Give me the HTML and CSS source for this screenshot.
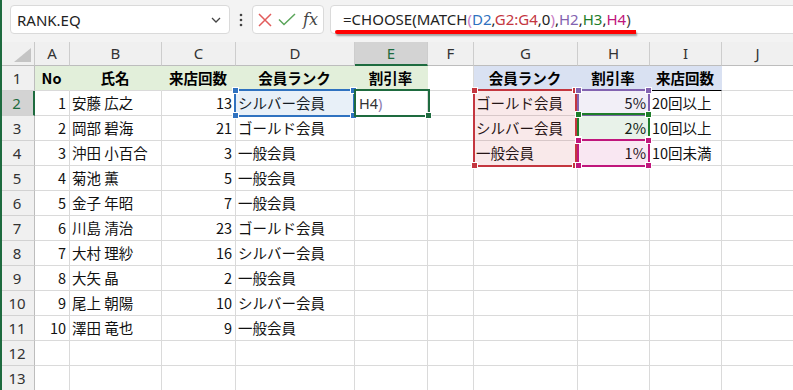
FILE: index.html
```html
<!DOCTYPE html>
<html lang="ja">
<head>
<meta charset="utf-8">
<title>RANK.EQ</title>
<link rel="stylesheet" href="styles.css">
</head>
<body>
<div class="app">
  <div class="edge"></div>
  <div class="toolbar">
    <div class="namebox">
      <span class="nb-text">RANK.EQ</span>
      <svg class="chev" width="10" height="6" viewBox="0 0 10 6"><polyline points="1,1 5,5 9,1" fill="none" stroke="#444" stroke-width="1.3"/></svg>
    </div>
    <div class="dots">
      <svg width="4" height="14" viewBox="0 0 4 14"><circle cx="2" cy="2" r="1.3" fill="#444"/><circle cx="2" cy="7" r="1.3" fill="#444"/><circle cx="2" cy="12" r="1.3" fill="#444"/></svg>
    </div>
    <div class="fxbox">
      <svg width="14" height="14" viewBox="0 0 14 14"><path d="M1 1 L13 13 M13 1 L1 13" stroke="#e25c5c" stroke-width="1.5" fill="none"/></svg>
      <svg width="18" height="13" viewBox="0 0 18 13"><polyline points="1,6.5 6,11.5 17,1" fill="none" stroke="#5aa55a" stroke-width="1.5"/></svg>
      <span class="fx">fx</span>
    </div>
    <div class="formula"><span class="k">=CHOOSE(MATCH</span><span class="pp">(</span><span class="c-d2">D2</span><span class="k">,</span><span class="c-g">G2:G4</span><span class="k">,0</span><span class="pp">)</span><span class="k">,</span><span class="c-h2">H2</span><span class="k">,</span><span class="c-h3">H3</span><span class="k">,</span><span class="c-h4">H4</span><span class="k2">)</span></div>
    <div class="underline"></div>
  </div>

  <div class="sheet">
    <div class="row colhead">
      <div class="corner"><svg width="17" height="14" viewBox="0 0 17 14"><polygon points="17,0 17,14 0,14" fill="#c4c4c4"/></svg></div>
      <div class="ch">A</div><div class="ch">B</div><div class="ch">C</div><div class="ch">D</div><div class="ch sel">E</div><div class="ch">F</div><div class="ch">G</div><div class="ch">H</div><div class="ch">I</div><div class="ch">J</div>
    </div>

    <div class="row">
      <div class="rh">1</div>
      <div class="c hg">No</div><div class="c hg">氏名</div><div class="c hg">来店回数</div><div class="c hg">会員ランク</div><div class="c hg">割引率</div>
      <div class="c"></div>
      <div class="c hb">会員ランク</div><div class="c hb">割引率</div><div class="c hb bb">来店回数</div>
      <div class="c"></div>
    </div>

    <div class="row">
      <div class="rh sel">2</div>
      <div class="c r">1</div><div class="c">安藤 広之</div><div class="c r">13</div><div class="c">シルバー会員</div><div class="c edit"><span class="et">H4</span><span class="ep">)</span></div>
      <div class="c"></div>
      <div class="c">ゴールド会員</div><div class="c r">5%</div><div class="c">20回以上</div>
      <div class="c"></div>
    </div>

    <div class="row">
      <div class="rh">3</div>
      <div class="c r">2</div><div class="c">岡部 碧海</div><div class="c r">21</div><div class="c">ゴールド会員</div><div class="c"></div>
      <div class="c"></div>
      <div class="c">シルバー会員</div><div class="c r">2%</div><div class="c">10回以上</div>
      <div class="c"></div>
    </div>

    <div class="row">
      <div class="rh">4</div>
      <div class="c r">3</div><div class="c">沖田 小百合</div><div class="c r">3</div><div class="c">一般会員</div><div class="c"></div>
      <div class="c"></div>
      <div class="c">一般会員</div><div class="c r">1%</div><div class="c">10回未満</div>
      <div class="c"></div>
    </div>

    <div class="row">
      <div class="rh">5</div>
      <div class="c r">4</div><div class="c">菊池 薫</div><div class="c r">5</div><div class="c">一般会員</div><div class="c"></div>
      <div class="c"></div><div class="c"></div><div class="c"></div><div class="c"></div><div class="c"></div>
    </div>

    <div class="row">
      <div class="rh">6</div>
      <div class="c r">5</div><div class="c">金子 年昭</div><div class="c r">7</div><div class="c">一般会員</div><div class="c"></div>
      <div class="c"></div><div class="c"></div><div class="c"></div><div class="c"></div><div class="c"></div>
    </div>

    <div class="row">
      <div class="rh">7</div>
      <div class="c r">6</div><div class="c">川島 清治</div><div class="c r">23</div><div class="c">ゴールド会員</div><div class="c"></div>
      <div class="c"></div><div class="c"></div><div class="c"></div><div class="c"></div><div class="c"></div>
    </div>

    <div class="row">
      <div class="rh">8</div>
      <div class="c r">7</div><div class="c">大村 理紗</div><div class="c r">16</div><div class="c">シルバー会員</div><div class="c"></div>
      <div class="c"></div><div class="c"></div><div class="c"></div><div class="c"></div><div class="c"></div>
    </div>

    <div class="row">
      <div class="rh">9</div>
      <div class="c r">8</div><div class="c">大矢 晶</div><div class="c r">2</div><div class="c">一般会員</div><div class="c"></div>
      <div class="c"></div><div class="c"></div><div class="c"></div><div class="c"></div><div class="c"></div>
    </div>

    <div class="row">
      <div class="rh">10</div>
      <div class="c r">9</div><div class="c">尾上 朝陽</div><div class="c r">10</div><div class="c">シルバー会員</div><div class="c"></div>
      <div class="c"></div><div class="c"></div><div class="c"></div><div class="c"></div><div class="c"></div>
    </div>

    <div class="row">
      <div class="rh">11</div>
      <div class="c r">10</div><div class="c">澤田 竜也</div><div class="c r">9</div><div class="c">一般会員</div><div class="c"></div>
      <div class="c"></div><div class="c"></div><div class="c"></div><div class="c"></div><div class="c"></div>
    </div>

    <div class="row">
      <div class="rh">12</div>
      <div class="c"></div><div class="c"></div><div class="c"></div><div class="c"></div><div class="c"></div>
      <div class="c"></div><div class="c"></div><div class="c"></div><div class="c"></div><div class="c"></div>
    </div>

    <div class="row">
      <div class="rh">13</div>
      <div class="c"></div><div class="c"></div><div class="c"></div><div class="c"></div><div class="c"></div>
      <div class="c"></div><div class="c"></div><div class="c"></div><div class="c"></div><div class="c"></div>
    </div>

    <!-- range highlights (overlays) -->
    <div class="rng rng-d2"><i class="hd tl"></i><i class="hd tr"></i><i class="hd bl"></i><i class="hd br"></i></div>
    <div class="rng rng-g"><i class="hd tl"></i><i class="hd tr"></i><i class="hd bl"></i><i class="hd br"></i></div>
    <div class="rng rng-h2"><i class="hd tl"></i><i class="hd tr"></i><i class="hd bl"></i><i class="hd br"></i></div>
    <div class="rng rng-h3"><i class="hd tl"></i><i class="hd tr"></i><i class="hd bl"></i><i class="hd br"></i></div>
    <div class="rng rng-h4"><i class="hd tl"></i><i class="hd tr"></i><i class="hd bl"></i><i class="hd br"></i></div>
    <div class="active"><i class="hd br"></i></div>
  </div>
</div>
</body>
</html>
```

FILE: styles.css
```css
* { box-sizing: border-box; }

html, body {
  margin: 0;
  padding: 0;
  background: #ffffff;
}

.app {
  position: relative;
  width: 793px;
  height: 390px;
  overflow: hidden;
  background: #ffffff;
  --cols: 35px 35px 92px 74px 119px 73px 46px 104px 72px 72px 72px;
  --grid: #dadada;
}

.edge {
  position: absolute;
  left: 0;
  top: 0;
  bottom: 0;
  width: 2px;
  background: #1e6b3f;
  z-index: 10;
}

/* ---------- toolbar ---------- */
.toolbar {
  position: relative;
  height: 42px;
  background: #f3f3f3;
  display: flex;
  align-items: flex-start;
  padding: 5px 0 0 10px;
  font-family: "Noto Sans", "Open Sans", sans-serif;
  color: #222;
}

.namebox {
  flex: none;
  width: 220px;
  height: 29px;
  background: #fff;
  border: 1px solid #dadada;
  border-radius: 4px;
  display: flex;
  align-items: center;
  justify-content: space-between;
  padding: 0 6px 0 6px;
}

.nb-text {
  font-size: 15px;
  letter-spacing: 0;
  color: #222;
}

.chev { margin-right: 2px; }

.dots {
  flex: none;
  width: 22px;
  height: 29px;
  display: flex;
  align-items: center;
  justify-content: center;
}

.fxbox {
  flex: none;
  width: 72px;
  height: 29px;
  background: #fff;
  border: 1px solid #dadada;
  border-radius: 4px;
  display: flex;
  align-items: center;
  gap: 6px;
  padding-left: 5px;
  margin-right: 6px;
}

.fx {
  font-family: "DejaVu Serif", "Liberation Serif", serif;
  font-style: italic;
  font-size: 16px;
  color: #444;
  margin-left: 1px;
}

.formula {
  flex: none;
  width: 500px;
  height: 29px;
  background: #fff;
  border: 1px solid #dadada;
  border-radius: 4px 0 0 4px;
  padding-left: 12px;
  font-size: 15px;
  line-height: 27px;
  white-space: nowrap;
}

.formula .k { color: #222; }
.formula .k2 { color: #444; }
.formula .pp { color: #c97cc4; }
.c-d2 { color: #2f72c0; }
.c-g { color: #c4363f; }
.c-h2 { color: #8363b0; }
.c-h3 { color: #1e7d2a; }
.c-h4 { color: #c0167c; }

.underline {
  position: absolute;
  left: 335px;
  top: 30px;
  width: 301px;
  height: 4px;
  background: #ff0000;
  border-radius: 2px 0 0 2px;
  box-shadow: 1px 2px 2px rgba(0, 0, 0, 0.35);
}

/* ---------- sheet ---------- */
.sheet {
  position: relative;
  font-family: "Noto Sans CJK JP", "Noto Sans", sans-serif;
  font-size: 14.5px;
  color: #111;
}

.row {
  display: grid;
  grid-template-columns: var(--cols);
  height: 25px;
}

.colhead {
  height: 24px;
  background: #f0f0f0;
}

.corner {
  border-right: 1px solid #c9c9c9;
  border-bottom: 1px solid #bdbdbd;
  display: flex;
  align-items: flex-end;
  justify-content: flex-end;
  padding: 0 3px 3px 0;
}

.ch {
  font-family: "Noto Sans", sans-serif;
  font-size: 15px;
  color: #333;
  text-align: center;
  line-height: 22px;
  border-right: 1px solid #cdcdcd;
  border-bottom: 1px solid #bdbdbd;
}

.ch.sel {
  background: #d3d3d3;
  color: #1e6b3f;
  border-bottom: 2px solid #1e6b3f;
}

.rh {
  font-family: "Noto Sans", sans-serif;
  font-size: 15px;
  color: #333;
  background: #f0f0f0;
  text-align: center;
  line-height: 24px;
  border-right: 1px solid #bdbdbd;
  border-bottom: 1px solid #d2d2d2;
}

.rh.sel {
  background: #d3d3d3;
  color: #1e6b3f;
  border-right: 2px solid #1e6b3f;
}

.c {
  border-right: 1px solid var(--grid);
  border-bottom: 1px solid var(--grid);
  line-height: 24px;
  padding: 0 3px 0 2px;
  white-space: nowrap;
  overflow: visible;
}

.c.r { text-align: right; }

.c.hg {
  background: #e2efda;
  border-right-color: transparent;
  font-weight: bold;
  text-align: center;
  color: #000;
}

.c.hb {
  background: #d9e1f2;
  border-right-color: transparent;
  font-weight: bold;
  text-align: center;
  color: #000;
}

.c.bb { border-bottom-color: #000; }

.c.edit { padding-left: 4px; }
.et { color: #333; font-family: "Noto Sans", sans-serif; }
.ep { color: #8a7bb0; font-family: "Noto Sans", sans-serif; }

/* ---------- range highlight overlays ---------- */
.rng, .active {
  position: absolute;
  border: 2px solid;
  pointer-events: none;
}

.rng-d2 {
  left: 234px; top: 47px; width: 121px; height: 28px;
  border-color: #2f72c0;
  background: rgba(47, 114, 192, 0.11);
}
.rng-d2 .hd { background: #2f72c0; }

.rng-g {
  left: 473px; top: 47px; width: 104px; height: 78px;
  border-color: #c4363f;
  background: rgba(196, 54, 63, 0.11);
}
.rng-g .hd { background: #c4363f; }

.rng-h2 {
  left: 577px; top: 47px; width: 73px; height: 27px;
  border-color: #8363b0;
  background: rgba(131, 99, 176, 0.10);
}
.rng-h2 .hd { background: #8363b0; }

.rng-h3 {
  left: 577px; top: 71px; width: 73px; height: 28px;
  border-color: #1e7d2a;
  background: rgba(30, 125, 42, 0.10);
}
.rng-h3 .hd { background: #1e7d2a; }

.rng-h4 {
  left: 577px; top: 97px; width: 73px; height: 28px;
  border-color: #c0167c;
  background: rgba(192, 22, 124, 0.10);
}
.rng-h4 .hd { background: #c0167c; }

.active {
  left: 354px; top: 47px; width: 76px; height: 28px;
  border-color: #1e6b3f;
}
.active .hd { background: #1e6b3f; }

.hd {
  position: absolute;
  width: 5px;
  height: 5px;
  box-shadow: 0 0 0 1px #ffffff;
}
.hd.tl { left: -3px; top: -3px; }
.hd.tr { right: -3px; top: -3px; }
.hd.bl { left: -3px; bottom: -3px; }
.hd.br { right: -3px; bottom: -3px; }
```
